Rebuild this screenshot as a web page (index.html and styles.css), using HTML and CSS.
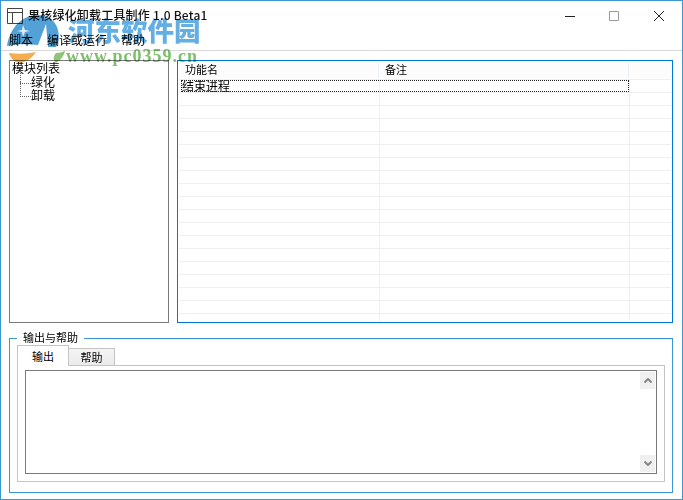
FILE: index.html
```html
<!DOCTYPE html>
<html lang="en">
<head>
    <meta charset="UTF-8">
    <title>果核绿化卸载工具制作 1.0 Beta1</title>
    <link rel="stylesheet" href="styles.css">
</head>
<body>
<div class="window">
    <div class="titlebar">
        <svg class="app-icon" width="16" height="16" viewBox="0 0 16 16">
            <path d="M.5.500h15v15H.5zM.5 4.500h15M5.500 4.500v11" fill="#fff" stroke="#444"/>
        </svg>
        <div class="title">果核绿化卸载工具制作 1.0 Beta1</div>
        <div class="win-btn min">
            <svg width="10" height="10" viewBox="0 0 10 10"><path d="M0 5.500h10" stroke="#222"/></svg>
        </div>
        <div class="win-btn">
            <svg width="10" height="10" viewBox="0 0 10 10"><path d="M.5.500h9v9h-9z" fill="none" stroke="#999"/></svg>
        </div>
        <div class="win-btn">
            <svg width="10" height="10" viewBox="0 0 10 10"><path d="M0 0l10 10M10 0L0 10" stroke="#222"/></svg>
        </div>
    </div>

    <div class="menubar">
        <span>脚本</span>
        <span>编译或运行</span>
        <span>帮助</span>
    </div>

    <div class="top-panels">
        <div class="tree">
            <div>模块列表</div>
            <div class="tree-item">绿化</div>
            <div class="tree-item">卸载</div>
        </div>
        <div class="list">
            <div class="list-head">
                <div class="col-name">功能名</div>
                <div class="col-note">备注</div>
                <div class="col-end"></div>
            </div>
            <div class="list-row first">
                <div class="col-name">结束进程</div>
                <div class="col-note"></div>
                <div class="col-end"></div>
                <div class="focus-rect"></div>
            </div>
            <div class="list-row"><div class="col-name"></div><div class="col-note"></div><div class="col-end"></div></div>
            <div class="list-row"><div class="col-name"></div><div class="col-note"></div><div class="col-end"></div></div>
            <div class="list-row"><div class="col-name"></div><div class="col-note"></div><div class="col-end"></div></div>
            <div class="list-row"><div class="col-name"></div><div class="col-note"></div><div class="col-end"></div></div>
            <div class="list-row"><div class="col-name"></div><div class="col-note"></div><div class="col-end"></div></div>
            <div class="list-row"><div class="col-name"></div><div class="col-note"></div><div class="col-end"></div></div>
            <div class="list-row"><div class="col-name"></div><div class="col-note"></div><div class="col-end"></div></div>
            <div class="list-row"><div class="col-name"></div><div class="col-note"></div><div class="col-end"></div></div>
            <div class="list-row"><div class="col-name"></div><div class="col-note"></div><div class="col-end"></div></div>
            <div class="list-row"><div class="col-name"></div><div class="col-note"></div><div class="col-end"></div></div>
            <div class="list-row"><div class="col-name"></div><div class="col-note"></div><div class="col-end"></div></div>
            <div class="list-row"><div class="col-name"></div><div class="col-note"></div><div class="col-end"></div></div>
            <div class="list-row"><div class="col-name"></div><div class="col-note"></div><div class="col-end"></div></div>
            <div class="list-row"><div class="col-name"></div><div class="col-note"></div><div class="col-end"></div></div>
            <div class="list-row"><div class="col-name"></div><div class="col-note"></div><div class="col-end"></div></div>
            <div class="list-row"><div class="col-name"></div><div class="col-note"></div><div class="col-end"></div></div>
            <div class="list-row"><div class="col-name"></div><div class="col-note"></div><div class="col-end"></div></div>
            <div class="list-row last"><div class="col-name"></div><div class="col-note"></div><div class="col-end"></div></div>
        </div>
    </div>

    <fieldset class="output-group">
        <legend>输出与帮助</legend>
        <div class="tabs">
            <div class="tab active">输出</div>
            <div class="tab">帮助</div>
        </div>
        <div class="tab-pane">
            <div class="textbox">
                <div class="scrollbar">
                    <div class="scroll-btn">
                        <svg width="8" height="5" viewBox="0 0 8 5"><path d="M.500 4.500L4 1l3.500 3.500" fill="none" stroke="#858585" stroke-width="2"/></svg>
                    </div>
                    <div class="scroll-btn">
                        <svg width="8" height="5" viewBox="0 0 8 5"><path d="M.500.500L4 4 7.500.500" fill="none" stroke="#858585" stroke-width="2"/></svg>
                    </div>
                </div>
            </div>
        </div>
    </fieldset>

    <!-- site watermark sits over the top left corner -->
    <div class="watermark">
        <svg class="wm-logo" width="64" height="50" viewBox="0 0 64 50">
            <path d="M3 32C6 12 20 1 33 1c9 0 17 4 20 12 3 8 2 15-1 20h-8l-2-23-8 21C24 30 12 30 3 32z" fill="#3f97d3" fill-opacity=".9"/>
            <path d="M19 11l2 5 5 1-5 1-2 5-1-5-5-1 5-1z" fill="#fff" fill-opacity=".8"/>
            <path d="M5 39c8 1 18 1 27-1-3 5-9 10-16 11-5 0-9-4-11-10z" fill="#f0a030" fill-opacity=".85"/>
            <path d="M52 39c3 0 6-1 9-2-1 5-4 9-9 12-3-2-3-7 0-10z" fill="#7cb860" fill-opacity=".85"/>
        </svg>
        <div class="wm-name">河东软件园</div>
        <div class="wm-url">www.pc0359.cn</div>
    </div>
</div>
</body>
</html>
```

FILE: styles.css
```css
* {
    box-sizing: border-box;
}
html, body {
    margin: 0;
    padding: 0;
}
body {
    width: 683px;
    height: 500px;
    overflow: hidden;
    font-family: "Noto Sans CJK SC", "Liberation Sans", sans-serif;
    font-size: 12px;
    color: #000;
    background: #fff;
}
.window {
    position: relative;
    width: 683px;
    height: 500px;
    border: 1px solid #3a97d0;
    background: #fff;
    display: flex;
    flex-direction: column;
}

/* title bar */
.titlebar {
    height: 29px;
    display: flex;
    align-items: center;
    padding-left: 6px;
}
.app-icon {
    margin-right: 5px;
}
.title {
    flex: 1;
    font-size: 12px;
    font-weight: 500;
    letter-spacing: 0.2px;
    padding-bottom: 2px;
    color: #111;
}
.win-btn {
    width: 45px;
    height: 29px;
    padding-right: 1px;
    display: flex;
    align-items: center;
    justify-content: center;
}
.win-btn.min {
    padding-right: 0;
    padding-left: 1px;
}

/* menu */
.menubar {
    height: 21px;
    display: flex;
    align-items: center;
    gap: 14px;
    padding: 0 0 1px 8px;
    border-bottom: 1px solid #d9d9d9;
}

/* tree and list */
.top-panels {
    display: flex;
    gap: 8px;
    padding: 9px 9px 0 8px;
    height: 273px;
}
.tree {
    width: 160px;
    height: 263px;
    border: 1px solid #7a7a7a;
    padding: 0 0 0 2px;
    line-height: 13.5px;
}
.tree-item {
    position: relative;
    padding-left: 19px;
}
.tree-item::before {
    content: "";
    position: absolute;
    left: 8px;
    top: -6px;
    width: 10px;
    height: 14px;
    border-left: 1px dotted #666;
    border-bottom: 1px dotted #666;
}
.list {
    flex: 1;
    height: 263px;
    border: 1px solid #0078d7;
    padding: 1px 0 0 1px;
    overflow: hidden;
}
.list-head {
    display: flex;
    height: 16px;
    margin-bottom: 1px;
    margin-right: 1px;
    background: #fcfcfc;
    font-size: 11px;
    line-height: 15px;
}
.list-head .col-name {
    width: 200px;
    padding-left: 6px;
    border-right: 1px solid #e8f0fa;
}
.list-head .col-note {
    padding-left: 6px;
    border-right: 1px solid #e8f0fa;
}
.list-row {
    display: flex;
    height: 13px;
    margin-right: 1px;
    border-bottom: 1px solid #efefef;
}
.list-row.first {
    position: relative;
    height: 14px;
    border-top: 1px solid #efefef;
    line-height: 12px;
}
.list-row.last {
    height: 21px;
    border-bottom: 0;
}
.focus-rect {
    position: absolute;
    left: 2px;
    top: 0;
    width: 448px;
    height: 12px;
    border: 1px dotted #222;
}
.col-name {
    width: 201px;
    border-right: 1px solid #efefef;
    padding-left: 3px;
}
.col-note {
    width: 250px;
    border-right: 1px solid #efefef;
}
.col-end {
    flex: 1;
}

/* bottom group */
.output-group {
    margin: 7px 9px 0 8px;
    padding: 0 7px;
    height: 162px;
    border: 1px solid #3a97d0;
    min-width: 0;
}
.output-group legend {
    margin-left: 0;
    padding: 0 6px 2px;
    font-size: 11px;
    line-height: 12px;
}
.tabs {
    display: flex;
    height: 20px;
    align-items: flex-end;
    font-size: 11px;
}
.tab {
    width: 46px;
    height: 17px;
    line-height: 16px;
    text-align: center;
    border: 1px solid #c4c4c4;
    border-bottom: 0;
    border-left: 0;
    background: linear-gradient(#f4f4f4, #ebebeb);
}
.tab.active {
    width: 52px;
    height: 21px;
    line-height: 20px;
    background: #fff;
    border-left: 1px solid #c4c4c4;
    position: relative;
    z-index: 1;
    margin-bottom: -1px;
}
.tab-pane {
    height: 117px;
    border: 1px solid #c4c4c4;
    padding: 4px 7px 7px 7px;
}
.textbox {
    height: 104px;
    border: 1px solid #7a7a7a;
    display: flex;
    justify-content: flex-end;
}
.scrollbar {
    width: 15px;
    margin: 1px 1px 1px 0;
    display: flex;
    flex-direction: column;
    justify-content: space-between;
}
.scroll-btn {
    height: 17px;
    background: #f0f0f0;
    display: flex;
    align-items: center;
    justify-content: center;
}

/* watermark */
.watermark {
    position: absolute;
    left: 0;
    top: 0;
    width: 210px;
    height: 70px;
    pointer-events: none;
    mix-blend-mode: multiply;
}
.wm-logo {
    position: absolute;
    left: 3px;
    top: 13px;
}
.wm-name {
    position: absolute;
    left: 67px;
    top: 11px;
    font-weight: 900;
    font-size: 26.500px;
    line-height: 36px;
    color: rgba(72, 160, 222, 0.85);
    white-space: nowrap;
}
.wm-url {
    position: absolute;
    left: 65px;
    top: 45px;
    font-family: "Liberation Serif", serif;
    font-weight: 700;
    font-size: 18px;
    line-height: 20px;
    letter-spacing: 1px;
    color: rgba(110, 185, 90, 0.9);
    white-space: nowrap;
}
```
